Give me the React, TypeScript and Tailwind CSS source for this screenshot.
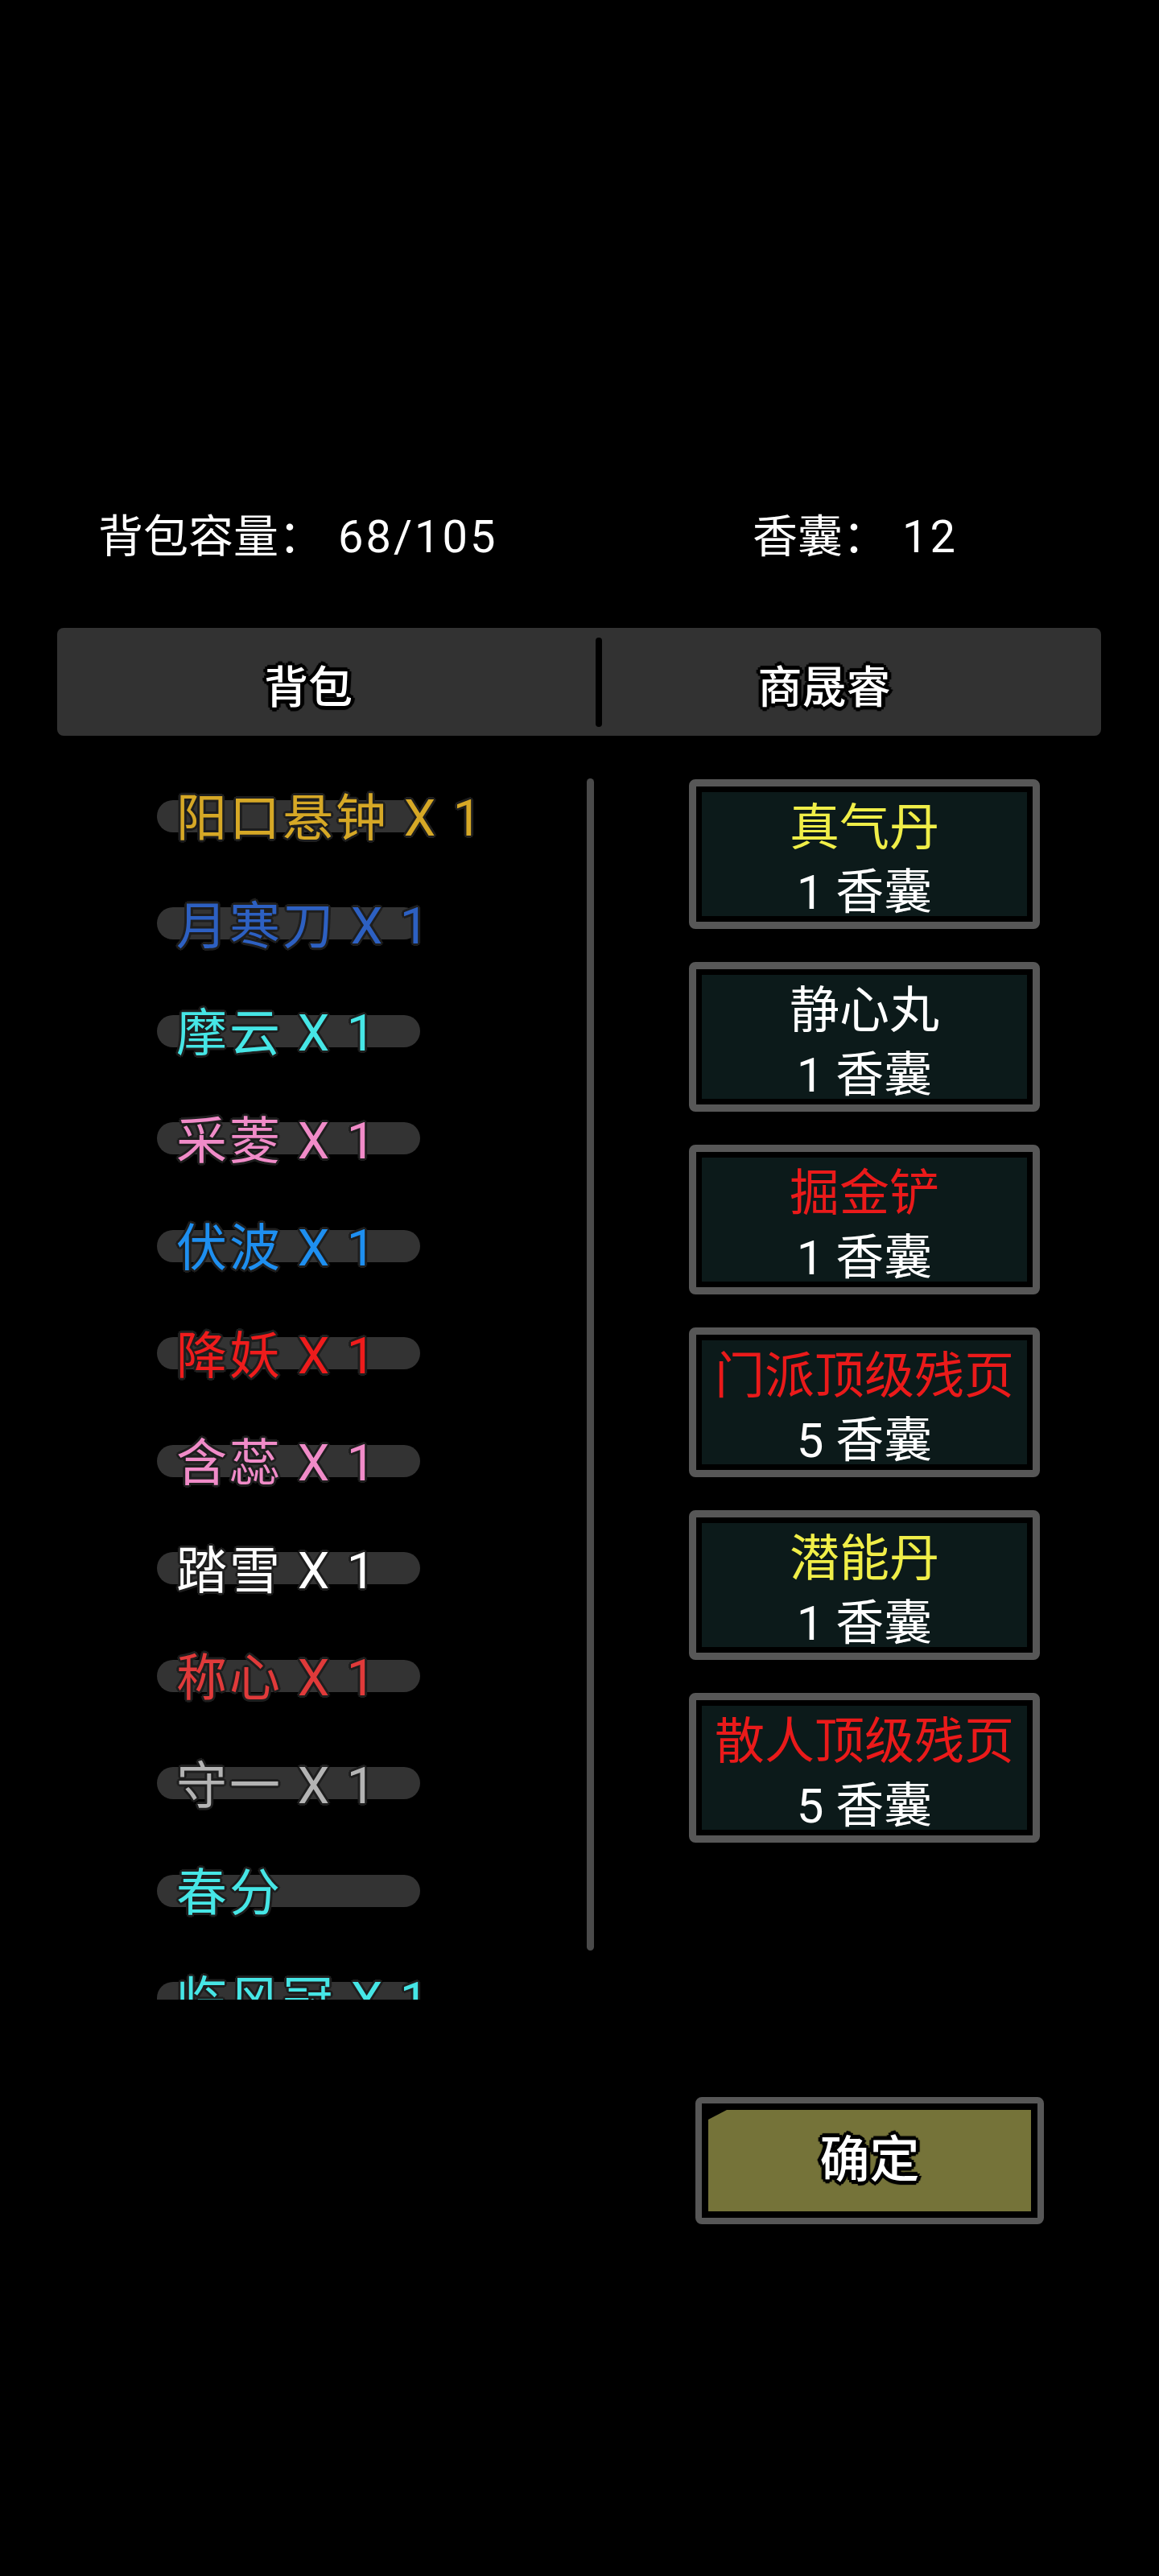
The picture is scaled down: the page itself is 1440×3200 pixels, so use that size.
import React from "react";

const FONT = "font-['Roboto','Noto_Sans_CJK_SC',sans-serif]";
const OUTLINE_SOFT =
  "[text-shadow:3px_0_0_#1e1e1e,-3px_0_0_#1e1e1e,0_3px_0_#1e1e1e,0_-3px_0_#1e1e1e,2px_2px_0_#1e1e1e,-2px_-2px_0_#1e1e1e,2px_-2px_0_#1e1e1e,-2px_2px_0_#1e1e1e]";
const OUTLINE_HARD =
  "[text-shadow:4px_0_0_#000,-4px_0_0_#000,0_4px_0_#000,0_-4px_0_#000,3px_3px_0_#000,-3px_-3px_0_#000,3px_-3px_0_#000,-3px_3px_0_#000,5px_0_1px_#000,-5px_0_1px_#000,0_5px_1px_#000,0_-5px_1px_#000]";

const items: { name: string; color: string }[] = [
  { name: "阳口悬钟 X 1", color: "text-[#d6a826]" },
  { name: "月寒刀 X 1", color: "text-[#2d60c2]" },
  { name: "摩云 X 1", color: "text-[#46e6e6]" },
  { name: "采菱 X 1", color: "text-[#f08bc8]" },
  { name: "伏波 X 1", color: "text-[#1e8ff0]" },
  { name: "降妖 X 1", color: "text-[#ee1c1c]" },
  { name: "含蕊 X 1", color: "text-[#f08bc8]" },
  { name: "踏雪 X 1", color: "text-[#ffffff]" },
  { name: "称心 X 1", color: "text-[#e03a3a]" },
  { name: "守一 X 1", color: "text-[#b4b4b4]" },
  { name: "春分", color: "text-[#46e6e6]" },
  { name: "临风冠 X 1", color: "text-[#46e6e6]" },
];

const cards: { title: string; color: string; price: string }[] = [
  { title: "真气丹", color: "text-[#f0ee48]", price: "1 香囊" },
  { title: "静心丸", color: "text-white", price: "1 香囊" },
  { title: "掘金铲", color: "text-[#ea1a1a]", price: "1 香囊" },
  { title: "门派顶级残页", color: "text-[#ea1a1a]", price: "5 香囊" },
  { title: "潜能丹", color: "text-[#f0ee48]", price: "1 香囊" },
  { title: "散人顶级残页", color: "text-[#ea1a1a]", price: "5 香囊" },
];

export default function App() {
  return (
    <div className={`w-[1440px] h-[3200px] bg-black overflow-hidden flex flex-col ${FONT}`}>
      {/* header */}
      <div className="mt-[639px] h-[56px] flex items-center text-white text-[56px] leading-none">
        <span className="ml-[122px] w-[813px] whitespace-pre">
          背包容量：<span className="ml-[18px] tracking-[3px]">68/105</span>
        </span>
        <span className="whitespace-pre">
          香囊：<span className="ml-[18px] tracking-[3px]">12</span>
        </span>
      </div>

      {/* tabs */}
      <div className="mt-[85px] ml-[71px] w-[1297px] h-[134px] rounded-[8px] bg-[#323232] flex">
        <div className={`w-[669px] pr-[45px] pt-[14px] flex items-center justify-center text-white text-[55px] font-medium leading-none ${OUTLINE_HARD}`}>
          背包
        </div>
        <div className="w-[8px] h-[111px] self-center rounded-full bg-black" />
        <div className={`flex-1 pr-[68px] pt-[14px] flex items-center justify-center text-white text-[55px] font-medium leading-none ${OUTLINE_HARD}`}>
          商晟睿
        </div>
      </div>

      {/* content */}
      <div className="mt-[33px] flex items-start">
        {/* list */}
        <div className="ml-[195px] w-[420px] h-[1537px] overflow-hidden flex flex-col">
          {items.map((it, i) => (
            <div key={i} className="h-[133.5px] shrink-0 grid items-center">
              <div className="col-start-1 row-start-1 w-[327px] h-[40px] rounded-full bg-[#333333]" />
              <div
                className={`col-start-1 row-start-1 pl-[24px] pt-[6px] text-[63px] leading-none whitespace-pre tracking-[3px] ${it.color} ${OUTLINE_SOFT}`}
              >
                {it.name}
              </div>
            </div>
          ))}
        </div>

        {/* scrollbar */}
        <div className="ml-[114px] mt-[20px] w-[9px] h-[1456px] rounded-full bg-[#4a4a4a]" />

        {/* shop cards */}
        <div className="ml-[118px] mt-[21px] w-[436px] flex flex-col gap-[41px]">
          {cards.map((c, i) => (
            <div key={i} className="h-[186px] rounded-[8px] border-[9px] border-[#575757] bg-black p-[7px]">
              <div className="h-full bg-[#0c1a1a] flex flex-col items-center pt-[15px]">
                <div className={`h-[60px] leading-[60px] text-[62px] whitespace-pre ${c.color}`}>{c.title}</div>
                <div className="mt-[20px] h-[60px] leading-[60px] text-[60px] text-white whitespace-pre">{c.price}</div>
              </div>
            </div>
          ))}
        </div>
      </div>

      {/* confirm */}
      <div className="mt-[121px] ml-[864px] w-[433px] h-[158px] rounded-[8px] border-[8px] border-[#575757] bg-black p-[8px]">
        <div className="h-full bg-[#757339] flex items-center justify-center [clip-path:polygon(23px_0,100%_0,100%_100%,0_100%,0_12px)]">
          <span className={`text-white text-[62px] leading-none font-medium ${OUTLINE_HARD}`}>确定</span>
        </div>
      </div>
    </div>
  );
}
